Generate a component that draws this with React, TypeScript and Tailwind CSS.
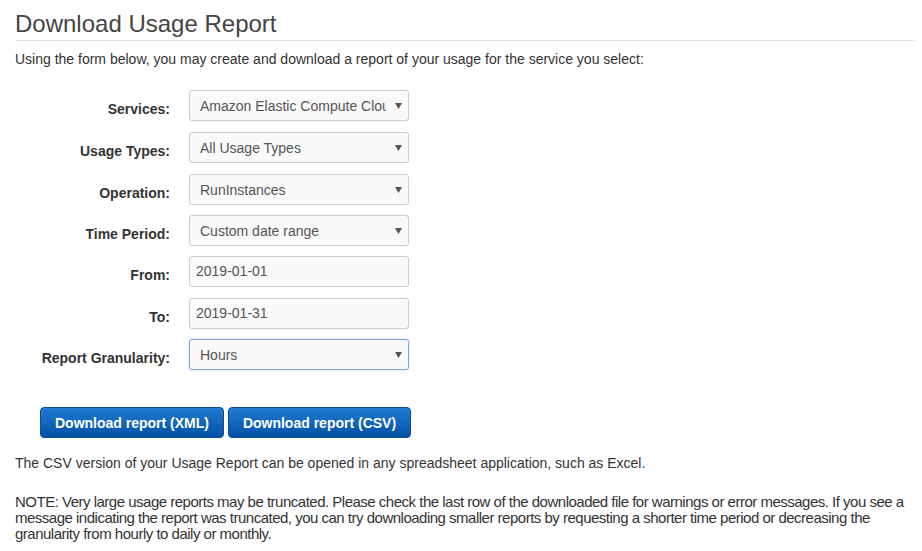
import React from "react";

const Caret = () => (
  <svg width="7" height="6" viewBox="0 0 7 6" className="absolute right-[6px] top-[12px]">
    <path d="M0 0 L7 0 L3.5 6 Z" fill="#555" />
  </svg>
);

function Select({ value, focus }: { value: string; focus?: boolean }) {
  return (
    <div
      className={`relative h-[31px] w-[220px] rounded-[3px] border bg-[#fafafa] pl-[10px] pr-[22px] text-[14px] leading-[30px] text-[#555] overflow-hidden whitespace-nowrap ${
        focus ? "border-[#7fa7e6] shadow-[0_0_2px_rgba(102,160,233,0.6)]" : "border-[#cccccc]"
      }`}
    >
      <span className="block overflow-hidden">{value}</span>
      <Caret />
    </div>
  );
}

function Input({ value }: { value: string }) {
  return (
    <div className="h-[31px] w-[220px] rounded-[3px] border border-[#cccccc] bg-[#fafafa] pl-[6px] text-[14px] leading-[29px] text-[#555]">
      {value}
    </div>
  );
}

const rows: { label: string; el: React.ReactNode; mt: string }[] = [
  { label: "Services:", el: <Select value="Amazon Elastic Compute Cloud" />, mt: "mt-0" },
  { label: "Usage Types:", el: <Select value="All Usage Types" />, mt: "mt-[11px]" },
  { label: "Operation:", el: <Select value="RunInstances" />, mt: "mt-[11px]" },
  { label: "Time Period:", el: <Select value="Custom date range" />, mt: "mt-[10px]" },
  { label: "From:", el: <Input value="2019-01-01" />, mt: "mt-[10px]" },
  { label: "To:", el: <Input value="2019-01-31" />, mt: "mt-[11px]" },
  { label: "Report Granularity:", el: <Select value="Hours" focus />, mt: "mt-[10px]" },
];

export default function App() {
  return (
    <div
      className="w-[922px] h-[551px] overflow-hidden bg-white pl-[15px] pr-[7px] text-[#333]"
      style={{ fontFamily: '"Liberation Sans", Arial, sans-serif' }}
    >
      <h1 className="pt-[10px] text-[24px] leading-[28px] text-[#444] font-normal">Download Usage Report</h1>
      <div className="mt-[2px] h-px w-[900px] bg-[#e3e3e3]" />
      <p className="mt-[9px] text-[14px] leading-[18px]">
        Using the form below, you may create and download a report of your usage for the service you select:
      </p>
      <div className="mt-[22px] flex flex-col">
        {rows.map((r) => (
          <div key={r.label} className={`flex items-start ${r.mt}`}>
            <div className="w-[155px] pt-[10px] text-right text-[14px] font-bold leading-[18px] text-[#333]">
              {r.label}
            </div>
            <div className="ml-[19px]">{r.el}</div>
          </div>
        ))}
      </div>
      <div className="mt-[37px] ml-[25px] flex gap-[4px]">
        <button className="h-[31px] w-[184px] rounded-[4px] border border-[#0b4e98] bg-gradient-to-b from-[#1f7bd3] to-[#0452a6] pt-px text-[14px] font-bold text-white">
          Download report (XML)
        </button>
        <button className="h-[31px] w-[183px] rounded-[4px] border border-[#0b4e98] bg-gradient-to-b from-[#1f7bd3] to-[#0452a6] pt-px text-[14px] font-bold text-white">
          Download report (CSV)
        </button>
      </div>
      <p className="mt-[16px] text-[14px] leading-[18px]">
        The CSV version of your Usage Report can be opened in any spreadsheet application, such as Excel.
      </p>
      <p className="mt-[22px] w-[900px] text-[15px] leading-[16px] tracking-[-0.5px] text-[#333]">
        NOTE: Very large usage reports may be truncated. Please check the last row of the downloaded file for warnings or error messages. If you see a message indicating the report was truncated, you can try downloading smaller reports by requesting a shorter time period or decreasing the granularity from hourly to daily or monthly.
      </p>
    </div>
  );
}
